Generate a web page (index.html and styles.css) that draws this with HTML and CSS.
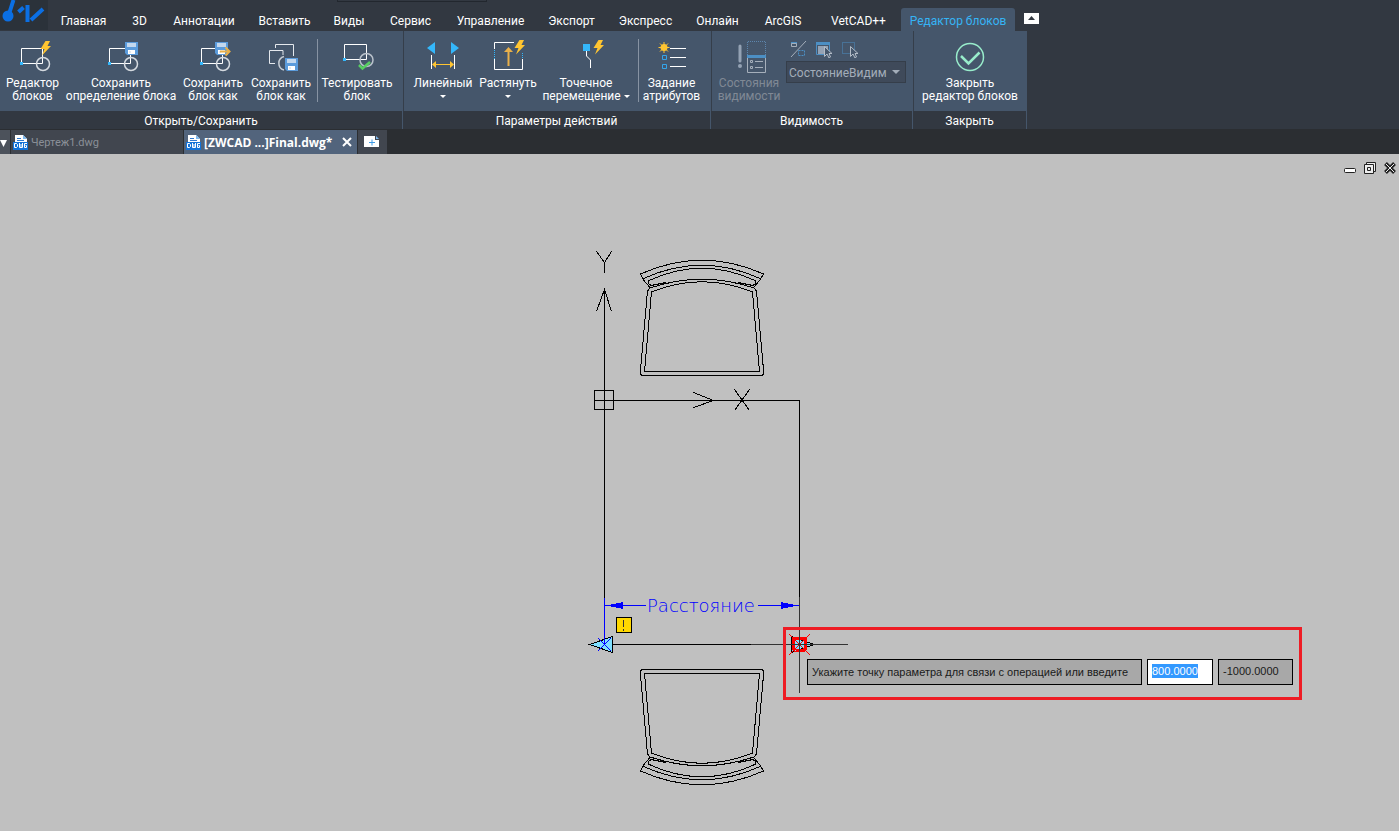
FILE: index.html
```html
<!DOCTYPE html>
<html lang="ru">
<head>
<meta charset="utf-8">
<title>ZWCAD</title>
<link rel="stylesheet" href="styles.css">
</head>
<body>
<svg class="defs" aria-hidden="true">
  <defs>
    <g id="bolt"><path d="M5.500 0H10L7.500 5H11L2 14.500 4.500 8H0.500Z" fill="#ffc531"/></g>
    <g id="floppy">
      <path d="M0 0H13V13H2L0 11Z" fill="#5b9bdb"/>
      <path d="M2 1H11V5H2Z" fill="#c3d8ee"/>
      <path d="M3 8H10V12H3Z" fill="#fff"/>
      <path d="M4 9H6V11H4Z" fill="#e4e9ef"/>
    </g>
    <g id="block" fill="none">
      <path d="M6.500 9.500H27.500V24.500H6.500Z" stroke="#fff"/>
      <circle cx="28" cy="25" r="6.500" stroke="#d5dae0" stroke-width="1.500"/>
      <path d="M5 23H8V26H5Z" fill="#34b7fb"/>
    </g>
    <g id="dwg">
      <path d="M2 0H10L14 4V9H2Z" fill="#fff"/>
      <path d="M10 0V4H14Z" fill="#7db8ee"/>
      <path d="M4 3.500H8M4 5.500H11" stroke="#2e78d0"/>
      <path d="M0 7H15V15H0Z" fill="#1272d8"/>
      <path d="M1.500 8.500V12.500H3.500L4.500 11.500V9.500L3.500 8.500ZM6.500 8V12.500H9.500V8M8 9V12M14 8.500H11.500V12.500H13.500V10.500H12.500" fill="none" stroke="#fff"/>
    </g>
    <g id="cursor"><path d="M0.500 0.500V10.500L3 8 5 12 6.500 11 5 7.500H8Z" fill="#45566b" stroke="#b3bcc7"/></g>
    <g id="chair" fill="none" stroke="#000">
      <path d="M640.500 274Q702 246.500 763.500 274L760 280 753.500 287.500"/>
      <path d="M640.500 274L643.500 280 650 287.500"/>
      <path d="M643.500 278.500Q702 252 760 278.500"/>
      <path d="M648 281Q702 255.500 756 281L755.500 283.500 753 285.500 738 282.500"/>
      <path d="M648 281L648.500 283.500 651 285.500 666 282.500"/>
      <path d="M647.500 291L650 288Q702 270.500 754 288L756.500 291"/>
      <path d="M651.500 292Q702 271.500 752.500 292L759.500 371.500H644.500Z"/>
      <path d="M647.500 291L640.500 370V374L642 375.500H762L763.500 374V370L756.500 291"/>
    </g>
  </defs>
</svg>

<div class="app">
  <header class="menubar">
    <div class="logo">
      <svg width="48" height="30" viewBox="0 0 48 30" fill="none" stroke="#0b6fe4" stroke-width="4">
        <circle cx="8" cy="16" r="5.500" fill="#0b6fe4" stroke="none"/>
        <path d="M9 14L13.500 0M18.500 12L23.500 7.500M27.500 5V22M31 20L43 9"/>
      </svg>
    </div>
    <div class="searchslot"></div>
    <nav class="tabs">
      <a class="tab" href="#">Главная</a>
      <a class="tab" href="#">3D</a>
      <a class="tab" href="#">Аннотации</a>
      <a class="tab" href="#">Вставить</a>
      <a class="tab" href="#">Виды</a>
      <a class="tab" href="#">Сервис</a>
      <a class="tab" href="#">Управление</a>
      <a class="tab" href="#">Экспорт</a>
      <a class="tab" href="#">Экспресс</a>
      <a class="tab" href="#">Онлайн</a>
      <a class="tab" href="#">ArcGIS</a>
      <a class="tab" href="#">VetCAD++</a>
      <a class="tab tab-active" href="#">Редактор блоков</a>
    </nav>
    <button class="collapse" aria-label="Свернуть ленту">
      <svg width="15" height="11" viewBox="0 0 15 11"><path d="M4 7L7.500 3 11 7Z" fill="#333941"/></svg>
    </button>
  </header>

  <div class="ribbon">
    <section class="panel panel-open">
      <div class="tools tools-open">
        <button class="tool">
          <svg class="icon" viewBox="0 0 36 34"><use href="#block"/><use href="#bolt" x="25" y="2"/></svg>
          <span class="label">Редактор<br>блоков</span>
        </button>
        <button class="tool">
          <svg class="icon" viewBox="0 0 36 34"><use href="#block"/><use href="#floppy" x="22" y="3"/></svg>
          <span class="label">Сохранить<br>определение блока</span>
        </button>
        <button class="tool">
          <svg class="icon" viewBox="0 0 36 34"><use href="#block"/><use href="#floppy" x="20" y="3"/>
            <path d="M25 12.500H34M30.500 8.500L34.500 12.500 30.500 16.500" fill="none" stroke="#e9b04a" stroke-width="2"/></svg>
          <span class="label">Сохранить<br>блок как</span>
        </button>
        <button class="tool">
          <svg class="icon" viewBox="0 0 36 34" fill="none" stroke="#e4e8ed">
            <path d="M12.500 9V5.500H30.500V17M20 16V11.500H6.500V24.500H12"/>
            <path d="M21 17.500A7 7 0 0 0 21 31" stroke="#c7ced6" stroke-width="1.500"/>
            <use href="#floppy" x="22" y="19" stroke="none"/>
          </svg>
          <span class="label">Сохранить<br>блок как</span>
        </button>
        <span class="rule"></span>
        <button class="tool">
          <svg class="icon" viewBox="0 0 36 34" fill="none">
            <path d="M5.500 5.500H27.500V20.500H5.500Z" stroke="#fff"/>
            <circle cx="27.500" cy="21" r="6.500" stroke="#b9c1cb" stroke-width="1.500"/>
            <path d="M4 19H7V22H4Z" fill="#34b7fb"/>
            <path d="M20 26L23.500 29.500 31 23" stroke="#58cf62" stroke-width="2.500"/>
          </svg>
          <span class="label">Тестировать<br>блок</span>
        </button>
      </div>
      <h2 class="caption">Открыть/Сохранить</h2>
    </section>

    <section class="panel panel-actions">
      <div class="tools tools-actions">
        <button class="tool">
          <svg class="icon" viewBox="0 0 36 34">
            <path d="M2 9L10 3V15ZM34 9L26 3V15Z" fill="#34b7fb"/>
            <path d="M6.500 16V30M29.500 16V30" stroke="#fff"/>
            <path d="M8 25.500H28" stroke="#ffc531"/>
            <path d="M7 25.500L11 22V29ZM29 25.500L25 22V29Z" fill="#ffc531"/>
          </svg>
          <span class="label">Линейный<br><i class="drop"></i></span>
        </button>
        <button class="tool">
          <svg class="icon" viewBox="0 0 36 34" fill="none">
            <path d="M24 3.500H4.500V10M4.500 20V30.500H32.500V20" stroke="#fff"/>
            <path d="M4.500 11V20M32.500 14V20" stroke="#34b7fb" stroke-dasharray="1 1"/>
            <path d="M18.500 27V10" stroke="#e9b04a" stroke-width="2"/>
            <path d="M14 13L18.500 8 23 13Z" fill="#e9b04a"/>
            <use href="#bolt" x="24" y="1"/>
          </svg>
          <span class="label">Растянуть<br><i class="drop"></i></span>
        </button>
        <button class="tool">
          <svg class="icon" viewBox="0 0 36 34" fill="none">
            <path d="M15 5H22V12H15Z" fill="#34b7fb"/>
            <path d="M18.500 12V17L22.500 21V29" stroke="#fff"/>
            <use href="#bolt" x="25" y="1"/>
          </svg>
          <span class="label">Точечное<br>перемещение <i class="drop"></i></span>
        </button>
        <span class="rule"></span>
        <button class="tool">
          <svg class="icon" viewBox="0 0 36 34" fill="none">
            <circle cx="10" cy="8.500" r="3.500" fill="#ffc531"/>
            <path d="M10 3V14M4.500 8.500H15.500M6 4.500L14 12.500M14 4.500L6 12.500" stroke="#ffc531"/>
            <path d="M16 9.500H32M16 18.500H32M16 27.500H32" stroke="#fff"/>
            <path d="M8.500 16.500H12.500V20.500H8.500ZM8.500 25.500H12.500V29.500H8.500Z" stroke="#34a5ea"/>
          </svg>
          <span class="label">Задание<br>атрибутов</span>
        </button>
      </div>
      <h2 class="caption">Параметры действий</h2>
    </section>

    <section class="panel panel-visibility">
      <div class="tools tools-visibility">
        <button class="tool" disabled>
          <svg class="icon" viewBox="0 0 36 34" fill="none">
            <path d="M9 7V22" stroke="#94a2b4" stroke-width="3" stroke-linecap="round"/>
            <circle cx="9" cy="27" r="2" fill="#94a2b4"/>
            <path d="M16.500 16V2.500H34.500V16" stroke="#5d86ad" stroke-dasharray="1 1"/>
            <path d="M16.500 17V33.500H34.500V17" stroke="#a5afbb"/>
            <path d="M16 16H35V19H16Z" fill="#4c8fc4"/>
            <path d="M19.500 21.500H21.500V23.500H19.500ZM19.500 27.500H21.500V29.500H19.500ZM24 22.500H32M24 28.500H32" stroke="#a5afbb"/>
          </svg>
          <span class="label">Состояния<br>видимости</span>
        </button>
        <div class="states">
          <div class="minis">
            <button class="mini" disabled aria-label="Режим видимости"><svg width="17" height="17" viewBox="0 0 17 17" fill="none">
              <path d="M1 16L16 0" stroke="#a5afbb"/><path d="M1 1H7V3H1Z" fill="#4c8fc4"/><path d="M1.500 2.500H6.500V5.500H1.500Z" stroke="#a5afbb"/><path d="M8.500 9.500H14.500V14.500H8.500Z" stroke="#4c8fc4" stroke-dasharray="2 1"/></svg></button>
            <button class="mini" disabled aria-label="Сделать видимым"><svg width="17" height="17" viewBox="0 0 17 17" fill="none">
              <path d="M0.500 1.500H13.500V13.500H0.500Z" stroke="#4c8fc4"/><path d="M0 1H14V4H0Z" fill="#4c8fc4"/><path d="M2 5H12V13H2Z" fill="#94a2b4"/><use href="#cursor" x="8" y="5"/></svg></button>
            <button class="mini" disabled aria-label="Сделать невидимым"><svg width="17" height="17" viewBox="0 0 17 17" fill="none">
              <path d="M0.500 1.500H12.500V12.500H0.500Z" stroke="#4c8fc4" stroke-dasharray="1 1"/><use href="#cursor" x="8" y="5"/></svg></button>
          </div>
          <div class="combo">
            <select class="combo-box" aria-label="Состояние видимости" disabled><option>СостояниеВидим</option></select>
            <i class="combo-arrow"></i>
          </div>
        </div>
      </div>
      <h2 class="caption">Видимость</h2>
    </section>

    <section class="panel panel-close">
      <div class="tools tools-close">
        <button class="tool">
          <svg class="icon" viewBox="0 0 36 34" fill="none" stroke="#98eccb">
            <circle cx="18" cy="18" r="13.500" stroke-width="1.500"/>
            <path d="M9 17L16.500 24.500 27.500 13.500" stroke-width="2.500"/>
          </svg>
          <span class="label">Закрыть<br>редактор блоков</span>
        </button>
      </div>
      <h2 class="caption">Закрыть</h2>
    </section>
  </div>

  <div class="docs">
    <button class="doclist" aria-label="Список документов"><svg width="9" height="23" viewBox="0 0 9 23"><path d="M0 9H7L3.500 16Z" fill="#fff"/></svg></button>
    <a class="doc" href="#"><svg width="15" height="15" viewBox="0 0 15 15"><use href="#dwg"/></svg><span>Чертеж1.dwg</span></a>
    <div class="doc doc-active">
      <svg width="15" height="15" viewBox="0 0 15 15"><use href="#dwg"/></svg><span>[ZWCAD ...]Final.dwg*</span>
      <button class="doc-close" aria-label="Закрыть"><svg width="10" height="10" viewBox="0 0 10 10"><path d="M1 1L9 9M9 1L1 9" stroke="#fff" stroke-width="2"/></svg></button>
    </div>
    <button class="newdoc" aria-label="Новый документ">
      <svg width="16" height="12" viewBox="0 0 16 12"><path d="M0 0H11L15 4V11H0Z" fill="#fff"/><path d="M11 0H15V4H11Z" fill="#41464f"/><path d="M12 0L15 3H12Z" fill="#7db8ee"/><path d="M5 6.500H11M8 3.500V9.500" stroke="#3f9be6"/></svg>
    </button>
  </div>

  <main class="canvas">
    <svg class="drawing" width="1399" height="677" viewBox="0 154 1399 677" shape-rendering="crispEdges" fill="none" stroke="#000">
      <use href="#chair"/>
      <use href="#chair" transform="translate(0 1045) scale(1 -1)"/>
      <path d="M604.500 290V598M594 400.500H799.500V598M594.500 390.500H613.500V409.500H594.500Z"/>
      <path d="M596.500 311.500L604.500 289.500 611.500 311.500M596.500 251.500L604.500 262.500 611.500 251.500M604.500 262V273"/>
      <path d="M693.500 392.500L713.500 400.500 693.500 407.500M734.500 389.500L749.500 410.500M749.500 389.500L734.500 410.500"/>
      <path d="M589.500 644.500L612.500 636.500V652.500Z" fill="#80e0ff"/>
      <path d="M612 644.500H751"/>
      <path d="M604.500 598V644M604 605.500H646M758 605.500H799M598 638L611 651M611 638L598 651" stroke="#00f"/>
      <path d="M606 605.500L623 602V609ZM798 605.500L781 602V609Z" fill="#00f" stroke="none"/>
      <text class="dimtext" x="647" y="612">Расстояние</text>
      <path d="M616.500 617.500H631.500V632.500H616.500Z" fill="#ffd800"/>
      <path d="M623.500 620V627M623.500 629V631" stroke="#333"/>
      <path d="M791.500 636.500L814.500 644.500 791.500 652.500Z" fill="#80e0ff"/>
      <path d="M793.500 638.500H805.500V648.500L803.500 650.500H795.500L793.500 648.500Z" stroke="#f00" stroke-width="3"/>
      <path d="M789 634L810 655M810 634L789 655" stroke="#f00"/>
      <path d="M751 644.500H848M799.500 597V693" stroke="#333"/>
    </svg>

    <div class="wincontrols">
      <button class="winbtn" aria-label="Свернуть"><svg width="12" height="12" viewBox="0 0 12 12"><rect x="0.500" y="6.500" width="11" height="4" rx="1" fill="#fff" stroke="#222"/></svg></button>
      <button class="winbtn" aria-label="Восстановить"><svg width="12" height="12" viewBox="0 0 12 12" fill="#eee" stroke="#222"><path d="M2.500 0.500H11.500V9.500H2.500Z"/><path d="M0.500 2.500H9.500V11.500H0.500ZM3.500 5.500H6.500V8.500H3.500Z"/></svg></button>
      <button class="winbtn" aria-label="Закрыть окно"><svg width="12" height="12" viewBox="0 0 12 12" fill="none"><path d="M1.500 1.500L10.500 10.500M10.500 1.500L1.500 10.500" stroke="#222" stroke-width="4"/><path d="M2 2L10 10M10 2L2 10" stroke="#eee"/></svg></button>
    </div>

    <form class="prompt">
      <label class="prompt-text" for="px">Укажите точку параметра для связи с операцией или введите</label>
      <div class="field field-x"><input class="value value-selected" id="px" value="800.0000"></div>
      <div class="field field-y"><input class="value" aria-label="Y" value="-1000.0000"></div>
    </form>
  </main>
</div>
</body>
</html>
```
FILE: styles.css
```css
* { box-sizing: border-box; }
body {
  margin: 0;
  background: #c0c0c0;
  font-family: Roboto, "Open Sans", sans-serif;
  font-size: 12px;
  color: #fff;
}
button {
  margin: 0;
  padding: 0;
  border: 0;
  background: none;
  color: inherit;
  font: inherit;
}
a { color: inherit; text-decoration: none; }
svg { display: block; flex: none; }
.defs { position: absolute; width: 0; height: 0; }

.app { display: flex; flex-direction: column; min-height: 100vh; }

.menubar {
  position: relative;
  display: flex;
  height: 31px;
  background: #323841;
}
.logo { width: 48px; height: 30px; background: #2b323a; }
.searchslot {
  position: absolute;
  top: 0;
  left: 337px;
  width: 150px;
  height: 2px;
  border: 1px solid #22272e;
  border-top: 0;
}
.tabs {
  display: grid;
  grid-template-columns: 71px 41px 88px 73px 56px 67px 93px 69px 79px 65px 66px 85px 114px;
  padding-top: 8px;
}
.tab {
  display: flex;
  align-items: center;
  justify-content: center;
  padding-top: 3px;
  white-space: nowrap;
}
.tab-active { background: #45566b; border-radius: 3px 3px 0 0; color: #35b4f5; }
.collapse {
  align-self: flex-start;
  height: 11px;
  margin: 13px 0 0 9px;
  background: #fff;
}

.ribbon { display: flex; background: #323841; }
.panel {
  display: flex;
  flex: none;
  flex-direction: column;
  border-right: 1px solid #45566b;
  background: #323841;
}
.panel-open { width: 403px; }
.panel-actions { width: 308px; }
.panel-visibility { width: 202px; }
.panel-close { width: 114px; }
.tools {
  display: grid;
  height: 80px;
  padding-top: 8px;
  background: #45566b;
}
.panel + .panel .tools { border-left: 1px solid #353e4a; }
.tools-open { grid-template-columns: 65px 112px 72px 64px 9px 70px; }
.tools-actions { grid-template-columns: 78px 52px 104px 1px 65px; }
.tools-visibility { grid-template-columns: 74px 122px; }
.tools-close { grid-template-columns: 112px; }
.caption {
  margin: 0;
  padding-top: 2px;
  font-size: 12px;
  font-weight: 400;
  line-height: 16px;
  text-align: center;
}
.tool {
  display: flex;
  flex-direction: column;
  align-items: center;
  gap: 4px;
}
.tool:disabled { color: #808995; }
.icon { width: 36px; height: 34px; }
.label { line-height: 13px; text-align: center; white-space: nowrap; }
.drop {
  display: inline-block;
  vertical-align: middle;
  border: 3px solid transparent;
  border-top-color: #fff;
  border-bottom: 0;
}
.rule { justify-self: center; width: 1px; height: 63px; background: #8793a3; }
.states { display: flex; flex-direction: column; gap: 3px; }
.minis { display: flex; gap: 9px; padding: 2px 0 0 4px; }
.combo { position: relative; height: 22px; width: 120px; }
.combo-box {
  width: 100%;
  height: 100%;
  padding: 1px 18px 0 2px;
  border: 1px solid #353e4a;
  border-radius: 0;
  background: #3f4a5a;
  color: #a3adb9;
  font: inherit;
  appearance: none;
  opacity: 1;
}
.combo-arrow {
  position: absolute;
  top: 9px;
  right: 6px;
  border: 4px solid transparent;
  border-top-color: #a3adb9;
  border-bottom: 0;
}

.docs {
  display: flex;
  height: 25px;
  padding-top: 1px;
  gap: 1px;
  background: #2b2e32;
}
.doclist { width: 10px; background: #4c525b; }
.doc {
  display: flex;
  align-items: center;
  gap: 3px;
  width: 172px;
  padding-left: 2px;
  background: #41464f;
  color: #8b9098;
  font-size: 11px;
}
.doc-active {
  width: 173px;
  background: #52647c;
  color: #fff;
  font-family: "Open Sans", sans-serif;
  font-size: 12px;
  font-weight: 700;
  white-space: nowrap;
}
.doc-close { margin: 0 5px 0 auto; }
.newdoc { width: 29px; padding-left: 6px; background: #41464f; }

.canvas { position: relative; flex: 1; overflow: hidden; min-height: 677px; background: #c0c0c0; }
.drawing { position: absolute; top: 0; left: 0; }
.dimtext {
  fill: #00f;
  stroke: none;
  font-family: "DejaVu Sans", sans-serif;
  font-size: 18px;
  font-weight: 200;
}
.wincontrols {
  position: absolute;
  top: 8px;
  right: 3px;
  display: flex;
  gap: 8px;
}
.prompt {
  position: absolute;
  top: 473px;
  left: 783px;
  display: flex;
  align-items: flex-start;
  gap: 5px;
  padding: 29px 6px 12px 21px;
  border: 3px solid #ee1c24;
  color: #1a1a1a;
  font-family: "Liberation Sans", sans-serif;
}
.prompt-text {
  width: 335px;
  padding-left: 4px;
  border: 1px solid #000;
  background: #a8a8a8;
  font-size: 11px;
  line-height: 24px;
  white-space: nowrap;
}
.field { height: 26px; padding: 4px; border: 1px solid #000; background: #a8a8a8; }
.field-x { width: 66px; background: #fff; }
.field-y { width: 75px; }
.value {
  display: block;
  width: 64px;
  height: 14px;
  padding: 0;
  border: 0;
  background: none;
  color: #1a1a1a;
  font-family: "Liberation Sans", sans-serif;
  font-size: 11px;
}
.value-selected { width: 46px; background: #3399ff; color: #fff; }
```
